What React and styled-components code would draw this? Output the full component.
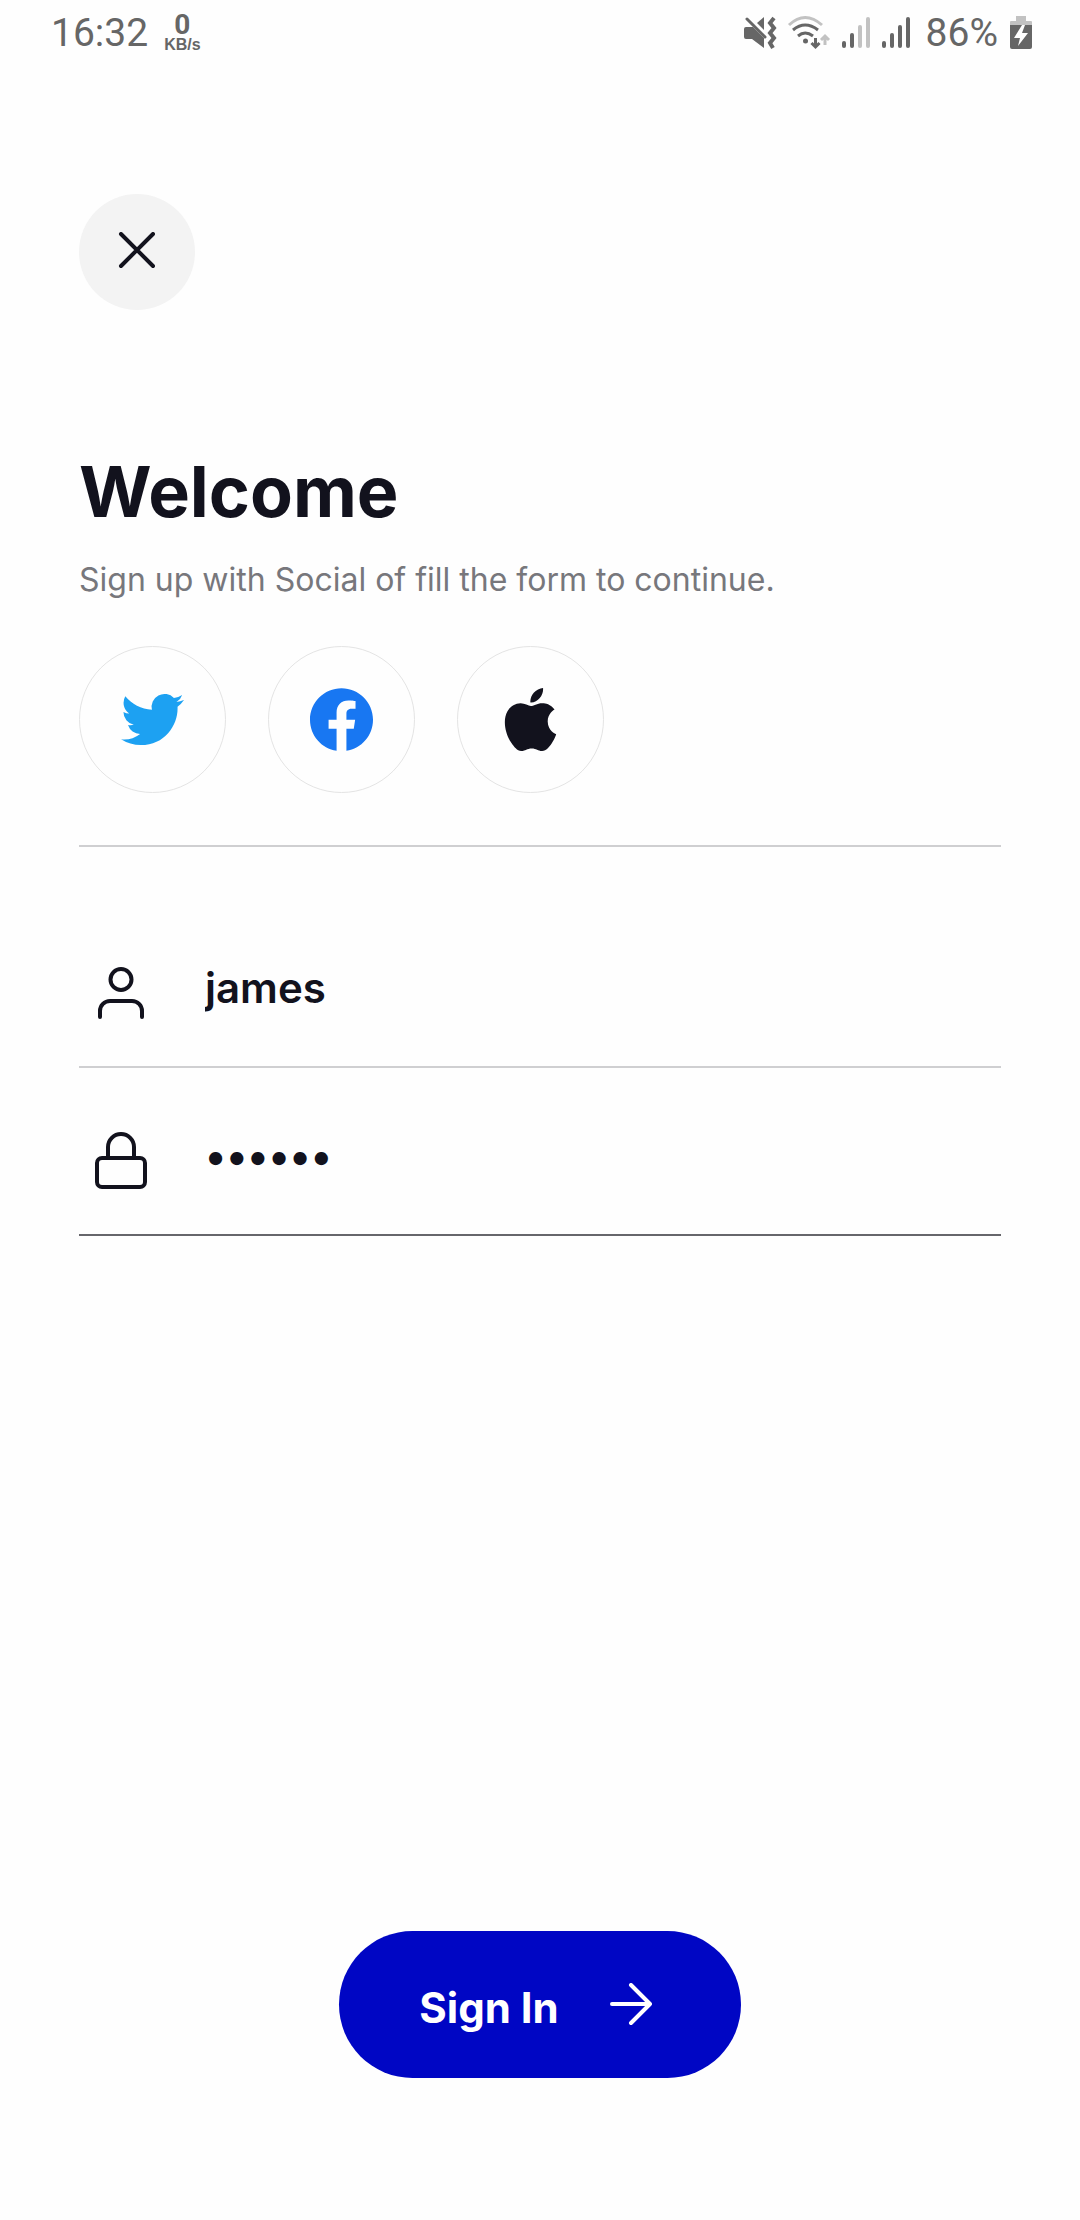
import React, { useState } from "react";
import styled, { createGlobalStyle } from "styled-components";

const ink = "#12121d";
const statusInk = "#666666";
const statusFaint = "#c2c2c2";

const GlobalStyle = createGlobalStyle`
  *, *::before, *::after { box-sizing: border-box; }
  body {
    margin: 0;
    background: #fefefe;
    color: ${ink};
    font-family: Inter, "Liberation Sans", sans-serif;
  }
`;

const Screen = styled.div`
  display: flex;
  flex-direction: column;
  min-height: 100vh;
`;

const StatusBar = styled.header`
  display: flex;
  align-items: center;
  justify-content: space-between;
  height: 66px;
  padding: 0 48px 0 51px;
  color: ${statusInk};
  font-family: Roboto, "Liberation Sans", sans-serif;
  font-size: 39px;
  line-height: 46px;
`;

const StatusGroup = styled.div`
  display: flex;
  align-items: center;
  gap: ${(p) => p.$gap}px;
`;

const BatteryLevel = styled.span`
  padding-left: 4px;
`;

const NetSpeed = styled.div`
  display: flex;
  flex-direction: column;
  align-items: center;
  font-weight: 700;
`;

const SpeedValue = styled.span`
  font-size: 28px;
  line-height: 24px;
`;

const SpeedUnit = styled.span`
  font-family: "Liberation Sans", sans-serif;
  font-size: 16px;
  line-height: 16px;
`;

const StatusIcon = styled.svg`
  display: block;
  flex: none;
  overflow: visible;
`;

const Content = styled.main`
  display: flex;
  flex: 1;
  flex-direction: column;
  padding: 128px 79px 142px;
`;

const CloseButton = styled.button`
  display: flex;
  align-items: center;
  justify-content: center;
  width: 116px;
  height: 116px;
  padding: 0;
  border: 0;
  border-radius: 50%;
  background: #f3f3f3;
  color: inherit;
  cursor: pointer;
`;

const Title = styled.h1`
  margin: 138px 0 0;
  font-size: 70px;
  font-weight: 700;
  line-height: 88px;
`;

const Subtitle = styled.p`
  margin: 24px 0 0;
  color: #77777c;
  font-size: 32px;
  line-height: 40px;
`;

const SocialRow = styled.div`
  display: flex;
  gap: 42px;
  margin-top: 46px;
`;

const SocialButton = styled.button`
  display: flex;
  align-items: center;
  justify-content: center;
  width: 147px;
  height: 147px;
  padding: 0;
  border: 1px solid #e4e4e4;
  border-radius: 50%;
  background: transparent;
  color: ${(p) => p.$tint};
  cursor: pointer;
`;

const Divider = styled.hr`
  width: 100%;
  height: 2px;
  margin: 52px 0 53px;
  border: 0;
  background: #cfcfd1;
`;

const Form = styled.form`
  display: flex;
  flex: 1;
  flex-direction: column;
`;

const Field = styled.label`
  display: flex;
  align-items: center;
  gap: 52px;
  height: 168px;
  padding: 20px 0 0 10px;
  border-bottom: 2px solid ${(p) => (p.$active ? "#66666b" : "#cfcfd1")};
`;

const Input = styled.input`
  flex: 1;
  min-width: 0;
  height: 146px;
  padding: 0 0 12px;
  border: 0;
  outline: 0;
  background: transparent;
  color: inherit;
  font-family: inherit;
  font-size: 42px;
  font-weight: 600;
`;

const SubmitButton = styled.button`
  display: flex;
  align-items: center;
  align-self: center;
  justify-content: center;
  gap: 50px;
  height: 147px;
  margin-top: auto;
  padding: 0 88px 0 80px;
  border: 0;
  border-radius: 74px;
  background: #0006c4;
  color: #ffffff;
  font-family: inherit;
  font-size: 42px;
  font-weight: 700;
  line-height: 48px;
  cursor: pointer;
`;

const SubmitLabel = styled.span`
  padding-top: 6px;
`;

function MuteIcon() {
  return (
    <StatusIcon width="32" height="32" viewBox="0 0 32 32" aria-hidden="true">
      <path d="M2 10h7l11 11v10L8 22H2q-2 0-2-2v-8q0-2 2-2z" fill={statusInk} />
      <path d="M13 6l7-6v13z" fill={statusInk} />
      <path d="M3 2l18 18" stroke={statusInk} strokeWidth="3" strokeLinecap="round" />
      <path d="M30 1l-4 5 4 5-4 5 4 5-4 5 3 5" fill="none" stroke={statusInk} strokeWidth="4" />
    </StatusIcon>
  );
}

function WifiIcon() {
  return (
    <StatusIcon width="42" height="32" viewBox="0 0 42 32" fill="none" strokeWidth="3" aria-hidden="true">
      <path d="M1 8Q17-7 34 8" stroke={statusFaint} />
      <path d="M5 13q12-10 25 0M10 19q7-6 15 0" stroke={statusInk} />
      <circle cx="17.500" cy="24" r="2.500" fill={statusInk} />
      <path d="M27.500 21v9m-4-4l4 4 4-4" stroke={statusInk} />
      <path d="M37 28V19m-4 4l4-4 4 4" stroke={statusFaint} />
    </StatusIcon>
  );
}

function SignalIcon({ strength }) {
  const bars = ["M2 26v3", "M10 18v11", "M18 10v19", "M26 2v27"];
  return (
    <StatusIcon width="28" height="32" viewBox="0 0 28 32" strokeWidth="4" strokeLinecap="round" aria-hidden="true">
      {bars.map((d, i) => (
        <path key={d} d={d} stroke={i < strength ? statusInk : statusFaint} />
      ))}
    </StatusIcon>
  );
}

function BatteryIcon() {
  return (
    <StatusIcon width="22" height="34" viewBox="0 0 22 34" aria-hidden="true">
      <path d="M6 0h10v5h5q1 0 1 1v4H0V6q0-1 1-1h5z" fill={statusFaint} />
      <path d="M0 9h22v22q0 2-2 2H2q-2 0-2-2z" fill={statusInk} />
      <path d="M12 9L4 22h6L8 30l10-13h-6l3-8z" fill="#fefefe" />
    </StatusIcon>
  );
}

function CloseIcon() {
  return (
    <svg width="40" height="40" viewBox="0 0 40 40" stroke="currentColor" strokeWidth="4" strokeLinecap="round" aria-hidden="true">
      <path d="M4 2l32 32M36 2L4 34" />
    </svg>
  );
}

function TwitterIcon() {
  return (
    <svg width="63" height="63" viewBox="0 0 24 24" fill="currentColor" aria-hidden="true">
      <path d="M23.953 4.570a10 10 0 01-2.825.775 4.958 4.958 0 002.163-2.723c-.951.555-2.005.959-3.127 1.184a4.920 4.920 0 00-8.384 4.482C7.690 8.095 4.067 6.130 1.640 3.162a4.822 4.822 0 00-.666 2.475c0 1.710.870 3.213 2.188 4.096a4.904 4.904 0 01-2.228-.616v.060a4.923 4.923 0 003.946 4.827 4.996 4.996 0 01-2.212.085 4.936 4.936 0 004.604 3.417 9.867 9.867 0 01-6.102 2.105c-.390 0-.779-.023-1.170-.067a13.995 13.995 0 007.557 2.209c9.053 0 13.998-7.496 13.998-13.985 0-.210 0-.420-.015-.630A9.935 9.935 0 0024 4.590z" />
    </svg>
  );
}

function FacebookIcon() {
  return (
    <svg width="63" height="63" viewBox="0 0 24 24" fill="currentColor" aria-hidden="true">
      <path d="M24 12.073c0-6.627-5.373-12-12-12s-12 5.373-12 12c0 5.990 4.388 10.954 10.125 11.854v-8.385H7.078v-3.470h3.047V9.430c0-3.007 1.792-4.669 4.533-4.669 1.312 0 2.686.235 2.686.235v2.953H15.830c-1.491 0-1.956.925-1.956 1.874v2.250h3.328l-.532 3.470h-2.796v8.385C19.612 23.027 24 18.062 24 12.073z" />
    </svg>
  );
}

function AppleIcon() {
  return (
    <svg width="63" height="63" viewBox="0 0 24 24" fill="currentColor" aria-hidden="true">
      <path d="M12.152 6.896c-.948 0-2.415-1.078-3.960-1.040-2.040.027-3.910 1.183-4.961 3.014-2.117 3.675-.546 9.103 1.519 12.090 1.013 1.454 2.208 3.090 3.792 3.039 1.520-.065 2.090-.987 3.935-.987 1.831 0 2.350.987 3.960.948 1.637-.026 2.676-1.480 3.676-2.948 1.156-1.688 1.636-3.325 1.662-3.415-.039-.013-3.182-1.221-3.220-4.857-.026-3.040 2.480-4.494 2.597-4.559-1.429-2.090-3.623-2.324-4.390-2.376-2-.156-3.675 1.090-4.610 1.090zM15.530 3.830c.843-1.012 1.400-2.427 1.245-3.830-1.207.052-2.662.805-3.532 1.818-.780.896-1.454 2.338-1.273 3.714 1.338.104 2.715-.688 3.559-1.701" />
    </svg>
  );
}

const FieldIcon = styled.svg`
  flex: none;
  width: 64px;
  height: 64px;
  fill: none;
  stroke: currentColor;
  stroke-width: 4px;
  stroke-linecap: round;
  stroke-linejoin: round;
`;

function UserIcon() {
  return (
    <FieldIcon viewBox="0 0 64 64" aria-hidden="true">
      <circle cx="32" cy="18.500" r="10.500" />
      <path d="M11 56v-6a10 10 0 0110-10h22a10 10 0 0110 10v6" />
    </FieldIcon>
  );
}

function LockIcon() {
  return (
    <FieldIcon viewBox="0 0 64 64" aria-hidden="true">
      <rect x="8" y="29" width="48" height="29" rx="5" />
      <path d="M19 29V18a13 13 0 0126 0v11" />
    </FieldIcon>
  );
}

function ArrowIcon() {
  return (
    <svg width="44" height="44" viewBox="0 0 44 44" fill="none" stroke="currentColor" strokeWidth="4" strokeLinecap="round" strokeLinejoin="round" aria-hidden="true">
      <path d="M3 21h38M22 2l19 19-19 19" />
    </svg>
  );
}

const socials = [
  { name: "Twitter", tint: "#1da1f2", Icon: TwitterIcon },
  { name: "Facebook", tint: "#1877f2", Icon: FacebookIcon },
  { name: "Apple", tint: ink, Icon: AppleIcon },
];

export default function App() {
  const [username, setUsername] = useState("james");
  const [password, setPassword] = useState("secret");

  return (
    <Screen>
      <GlobalStyle />
      <StatusBar>
        <StatusGroup $gap={16}>
          <span>16:32</span>
          <NetSpeed>
            <SpeedValue>0</SpeedValue>
            <SpeedUnit>KB/s</SpeedUnit>
          </NetSpeed>
        </StatusGroup>
        <StatusGroup $gap={12}>
          <MuteIcon />
          <WifiIcon />
          <SignalIcon strength={2} />
          <SignalIcon strength={4} />
          <BatteryLevel>86%</BatteryLevel>
          <BatteryIcon />
        </StatusGroup>
      </StatusBar>
      <Content>
        <CloseButton type="button" aria-label="Close">
          <CloseIcon />
        </CloseButton>
        <Title>Welcome</Title>
        <Subtitle>Sign up with Social of fill the form to continue.</Subtitle>
        <SocialRow>
          {socials.map(({ name, tint, Icon }) => (
            <SocialButton key={name} type="button" $tint={tint} aria-label={name}>
              <Icon />
            </SocialButton>
          ))}
        </SocialRow>
        <Divider />
        <Form onSubmit={(e) => e.preventDefault()}>
          <Field htmlFor="username">
            <UserIcon />
            <Input
              id="username"
              type="text"
              aria-label="Username"
              value={username}
              onChange={(e) => setUsername(e.target.value)}
            />
          </Field>
          <Field htmlFor="password" $active>
            <LockIcon />
            <Input
              id="password"
              type="password"
              aria-label="Password"
              value={password}
              onChange={(e) => setPassword(e.target.value)}
            />
          </Field>
          <SubmitButton type="submit">
            <SubmitLabel>Sign In</SubmitLabel>
            <ArrowIcon />
          </SubmitButton>
        </Form>
      </Content>
    </Screen>
  );
}
